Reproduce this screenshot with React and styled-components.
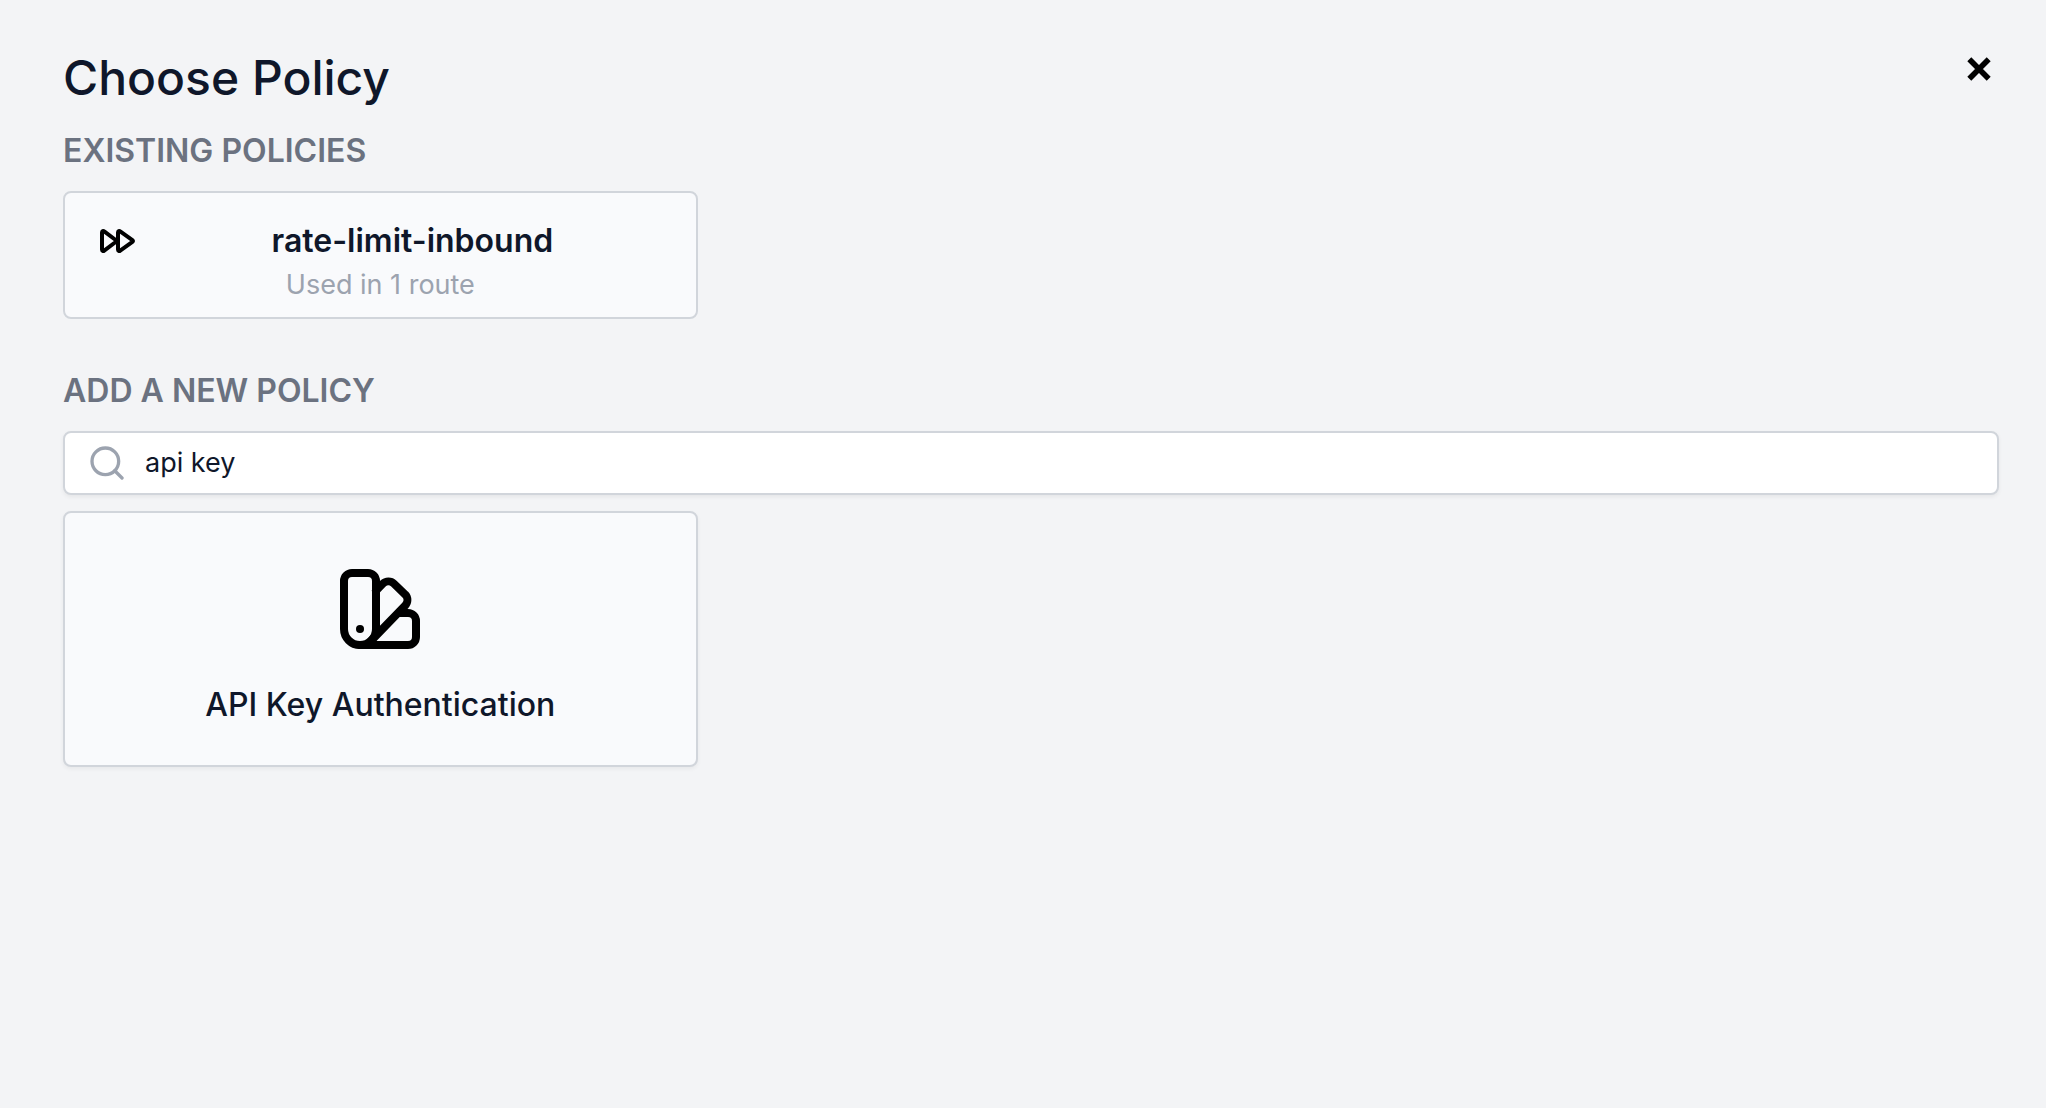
import React, { useState } from 'react';
import { Search } from 'lucide-react';
import styled, { createGlobalStyle } from 'styled-components';

const GlobalStyle = createGlobalStyle`
  * {
    box-sizing: border-box;
  }
  body {
    margin: 0;
    background: #f3f4f6;
    color: #0f172a;
    font-family: Inter, "Liberation Sans", sans-serif;
  }
  h2, h3, p {
    margin: 0;
  }
`

const Page = styled.main`
  min-height: 100vh;
  padding: 46px 47px 48px 63px;
`
const Header = styled.header`
  display: flex;
  justify-content: space-between;
  align-items: flex-start;
  margin-bottom: 1px;
`
const Title = styled.h2`
  font-size: 48px;
  line-height: 64px;
  font-weight: 500;
`
const CloseButton = styled.button`
  display: flex;
  padding: 11px 8px;
  border: 0;
  background: transparent;
  color: black;
  cursor: pointer;
`
const Section = styled.section`
  margin-bottom: 32px;
`
const SectionTitle = styled.h3`
  padding: 16px 0;
  font-size: 32px;
  line-height: 48px;
  font-weight: 600;
  color: #6b7280;
  text-transform: uppercase;
`
const Grid = styled.div`
  display: grid;
  grid-template-columns: repeat(3, 1fr);
  gap: 16px;
`
const Card = styled.button`
  display: flex;
  flex-direction: column;
  align-items: center;
  gap: ${props => (props.$large ? '24px' : '0')};
  width: 100%;
  padding: ${props => (props.$large ? '48px 32px 36px' : '24px 32px 12px')};
  border: 2px solid #d1d5db;
  border-radius: 8px;
  background: #f9fafc;
  color: inherit;
  font-family: inherit;
  cursor: pointer;
  box-shadow: 0 2px 4px rgba(0, 0, 0, ${props => (props.$large ? 0.05 : 0)});
`
const CardRow = styled.span`
  display: flex;
  align-items: center;
  gap: 24px;
  width: 100%;
`
const CardName = styled.span`
  flex: 1;
  font-size: 32px;
  line-height: 48px;
  font-weight: ${props => (props.$bold ? 600 : 500)};
`
const CardNote = styled.span`
  font-size: 27px;
  line-height: 40px;
  color: #9ca3af;
`
const SearchBox = styled.label`
  display: flex;
  align-items: center;
  gap: 18px;
  height: 64px;
  margin-bottom: 16px;
  padding: 0 22px;
  border: 2px solid #d1d5db;
  border-radius: 8px;
  background: white;
  color: #9ca3af;
  box-shadow: 0 2px 4px rgba(0, 0, 0, 0.06);
`
const SearchInput = styled.input`
  flex: 1;
  min-width: 0;
  padding: 0;
  border: 0;
  outline: 0;
  background: transparent;
  color: #0f172a;
  font-family: inherit;
  font-size: 27px;
  line-height: 40px;
`

const CloseIcon = () => (
  <svg width="24" height="24" viewBox="0 0 24 24" fill="none" stroke="currentColor" strokeWidth="5.6" aria-hidden="true">
    <path d="M2.3 2.3l19.4 19.4M21.7 2.3L2.3 21.7" />
  </svg>
)

const ForwardIcon = () => (
  <svg width="40" height="40" viewBox="0 0 40 40" fill="none" stroke="black" strokeWidth="4" strokeLinejoin="round" aria-hidden="true">
    <path d="M5 11.4c0-1.3 1.2-1.8 2.2-1L20 20L7.2 29.6c-1 .8-2.2.3-2.2-1z" />
    <path d="M21 11.4c0-1.3 1.2-1.8 2.2-1l12.2 8.7q1.2.9 0 1.8l-12.2 8.7c-1 .8-2.2.3-2.2-1z" />
  </svg>
)

const SwatchIcon = () => (
  <svg width="96" height="96" viewBox="0 0 24 24" fill="none" stroke="black" strokeWidth="2" strokeLinecap="round" strokeLinejoin="round" aria-hidden="true">
    <path d="M11 17a4 4 0 0 1-8 0V5a2 2 0 0 1 2-2h4a2 2 0 0 1 2 2Z" />
    <path d="M11 7.4l1.69-1.71a2 2 0 0 1 2.82 0l2.8 2.7a2 2 0 0 1 0 2.72L9.8 19.9" />
    <path d="M16.9 13H19a2 2 0 0 1 2 2v4a2 2 0 0 1-2 2H7" />
    <path d="M7 17h.01" />
  </svg>
)

const existing = [
  { name: 'rate-limit-inbound', note: 'Used in 1 route' },
]

const policies = [
  { name: 'API Key Authentication', icon: SwatchIcon },
]

function App() {
  const [query, setQuery] = useState('api key')
  const found = policies.filter(policy =>
    policy.name.toLowerCase().includes(query.toLowerCase())
  )

  return (
    <Page>
      <GlobalStyle />
      <Header>
        <Title>Choose Policy</Title>
        <CloseButton aria-label="Close">
          <CloseIcon />
        </CloseButton>
      </Header>
      <Section>
        <SectionTitle>Existing Policies</SectionTitle>
        <Grid>
          {existing.map(policy => (
            <Card key={policy.name}>
              <CardRow>
                <ForwardIcon />
                <CardName $bold>{policy.name}</CardName>
              </CardRow>
              <CardNote>{policy.note}</CardNote>
            </Card>
          ))}
        </Grid>
      </Section>
      <Section>
        <SectionTitle>Add a new policy</SectionTitle>
        <SearchBox>
          <Search size={40} strokeWidth={2} />
          <SearchInput
            aria-label="Search policies"
            value={query}
            onChange={event => setQuery(event.target.value)}
          />
        </SearchBox>
        <Grid>
          {found.map(({ name, icon: Icon }) => (
            <Card key={name} $large>
              <Icon />
              <CardName>{name}</CardName>
            </Card>
          ))}
        </Grid>
      </Section>
    </Page>
  )
}

export default App;
